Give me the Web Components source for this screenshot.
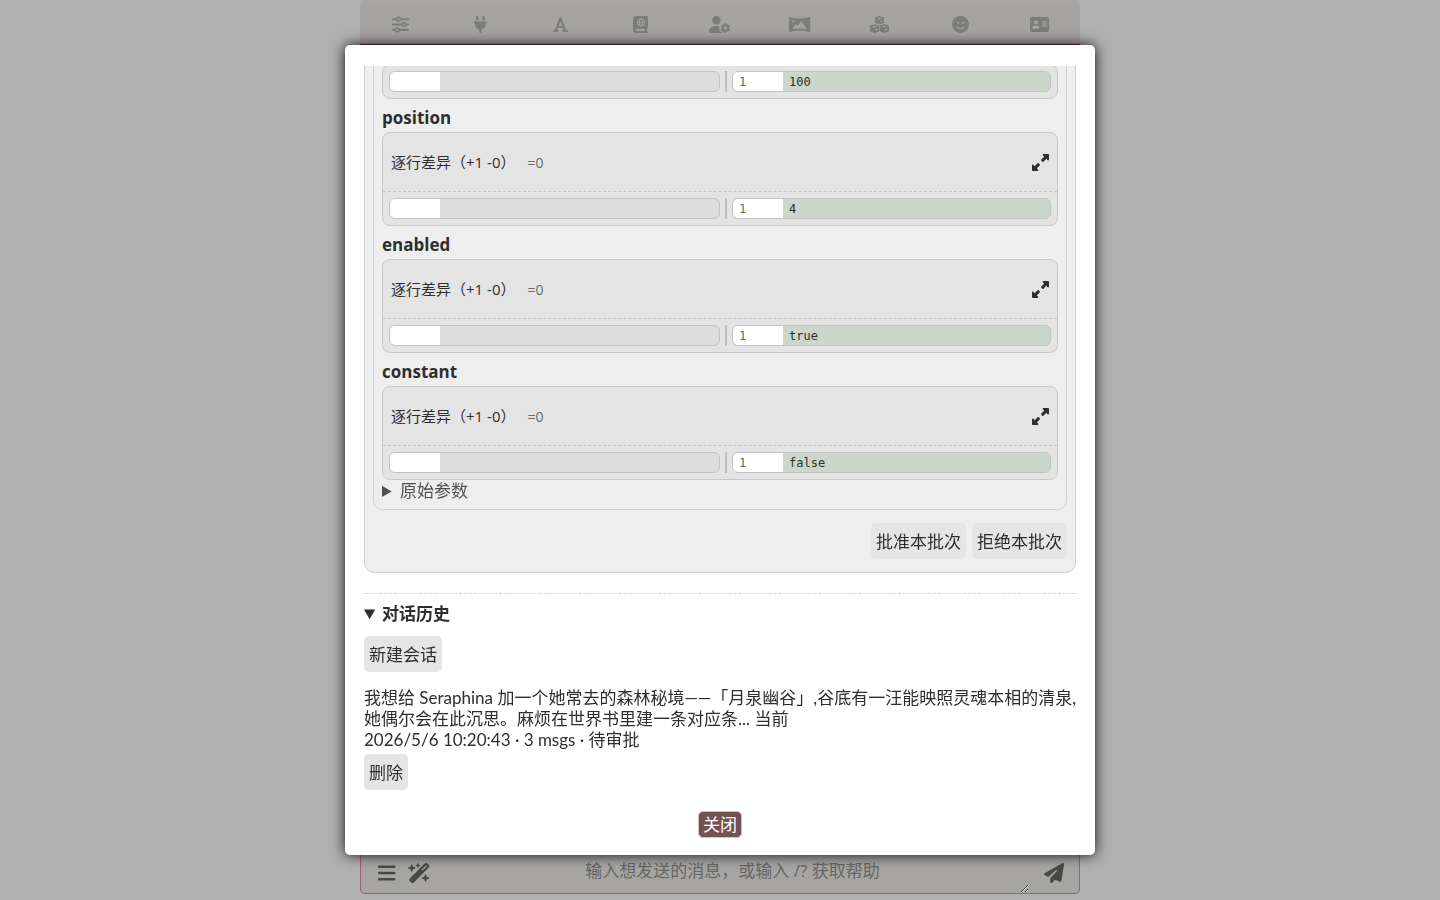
<!DOCTYPE html>
<html lang="zh-CN">
<head>
<meta charset="utf-8">
<meta name="viewport" content="width=device-width, initial-scale=1">
<title>Chat</title>
<style>
    html, body {
        height: 100%;
    }

    body {
        margin: 0;
        background: #b0b0b0;
        color: #2e2e2e;
        font: 17px/21px "Open Sans", "Noto Sans CJK SC", sans-serif;
        overflow: hidden;
    }
</style>
</head>
<body>
<chat-app></chat-app>

<script>
const ICONS = {
    sliders: [512, '<path d="M0 416c0 17.7 14.3 32 32 32l54.7 0c12.3 28.3 40.5 48 73.3 48s61-19.7 73.3-48L480 448c17.7 0 32-14.3 32-32s-14.3-32-32-32l-246.7 0c-12.3-28.3-40.5-48-73.3-48s-61 19.7-73.3 48L32 384c-17.7 0-32 14.3-32 32zm128 0a32 32 0 1 1 64 0 32 32 0 1 1 -64 0zM320 256a32 32 0 1 1 64 0 32 32 0 1 1 -64 0zm32-80c-32.8 0-61 19.7-73.3 48L32 224c-17.7 0-32 14.3-32 32s14.3 32 32 32l246.7 0c12.3 28.3 40.5 48 73.3 48s61-19.7 73.3-48l54.7 0c17.7 0 32-14.3 32-32s-14.3-32-32-32l-54.7 0c-12.3-28.3-40.5-48-73.3-48zM192 128a32 32 0 1 1 0-64 32 32 0 1 1 0 64zm73.3-64C253 35.7 224.8 16 192 16s-61 19.7-73.3 48L32 64C14.3 64 0 78.3 0 96s14.3 32 32 32l86.7 0c12.3 28.3 40.5 48 73.3 48s61-19.7 73.3-48L480 128c17.7 0 32-14.3 32-32s-14.3-32-32-32L265.3 64z"/>'],
    plug: [384, '<path d="M96 0C78.3 0 64 14.3 64 32v96h64V32c0-17.7-14.3-32-32-32zM288 0c-17.7 0-32 14.3-32 32v96h64V32c0-17.7-14.3-32-32-32zM32 160c-17.7 0-32 14.3-32 32s14.3 32 32 32v32c0 77.4 55 142 128 156.8V480c0 17.7 14.3 32 32 32s32-14.3 32-32V412.8C297 398 352 333.4 352 256V224c17.7 0 32-14.3 32-32s-14.3-32-32-32H32z"/>'],
    font: [448, '<g fill="none" stroke="currentColor" stroke-width="66" stroke-linecap="round" stroke-linejoin="round"><path d="M80 448L224 66 368 448M138 332h172M32 448h96M320 448h96"/></g>'],
    atlas: [448, '<path d="M0 96C0 43 43 0 96 0H384h32c17.7 0 32 14.3 32 32V352c0 17.7-14.3 32-32 32v64c17.7 0 32 14.3 32 32s-14.3 32-32 32H384 96c-53 0-96-43-96-96V96zM64 416c0 17.7 14.3 32 32 32H352V384H96c-17.7 0-32 14.3-32 32z"/><g fill="none" stroke="#a4a3a1" stroke-width="26"><circle cx="240" cy="192" r="112"/><ellipse cx="240" cy="192" rx="48" ry="112"/><path d="M128 192h224"/></g>'],
    userGear: [640, '<path d="M224 0a128 128 0 1 1 0 256A128 128 0 1 1 224 0zM178.3 304h91.4c11.8 0 23.4 1.2 34.5 3.3c-2.1 18.5 7.4 35.6 21.8 44.8c-16.6 10.6-26.7 31.6-20 53.3c4 12.9 9.4 25.5 16.4 37.6s15.2 23.1 24.4 33c15.7 16.9 39.6 18.4 57.2 8.7v.9c0 9.2 2.7 18.5 7.9 26.3H29.7C13.3 512 0 498.7 0 482.3C0 383.8 79.8 304 178.3 304z"/><g fill="none" stroke="currentColor"><circle cx="496" cy="360" r="84" stroke-width="66"/><path stroke-width="70" stroke-linecap="round" d="M496 248v-6M496 472v6M399 304l-5-3M593 416l5 3M399 416l-5 3M593 304l5-3"/></g>'],
    panorama: [640, '<path d="M45.6 32C20.4 32 0 52.4 0 77.6V434.4C0 459.6 20.4 480 45.6 480c5.1 0 10-.8 14.7-2.4C74.6 472.8 177.6 440 320 440s245.4 32.8 259.6 37.6c4.7 1.6 9.7 2.4 14.7 2.4c25.2 0 45.6-20.4 45.6-45.6V77.6C640 52.4 619.6 32 594.4 32c-5 0-10 .8-14.7 2.4C565.4 39.2 462.4 72 320 72S74.6 39.2 60.4 34.4C55.6 32.8 50.7 32 45.6 32zM96 160a32 32 0 1 1 64 0 32 32 0 1 1 -64 0zm272 0c7.9 0 15.4 3.9 19.8 10.5L512.3 353c5.4 8 5.6 18.4 .4 26.5s-14.7 12.3-24.2 10.7C442.7 382.4 385.2 376 320 376c-65.6 0-123.4 6.5-169.3 14.4c-9.8 1.7-19.7-2.9-24.7-11.5s-4.3-19.4 1.9-27.2L197.3 265c4.6-5.7 11.4-9 18.7-9s14.2 3.3 18.7 9l26.4 33.1 87-127.6c4.5-6.6 11.9-10.5 19.8-10.5z"/>'],
    cubes: [576, `<g stroke="currentColor" stroke-width="48" stroke-linejoin="round">
        <path d="M288 24l108 40v128l-108 44-108-44V64zM140 268l116 42v134l-116 44-116-44V310zM436 268l116 42v134l-116 44-116-44V310z"/></g>
        <g fill="#a4a3a1"><path d="M288 48l66 24-66 26-66-26zM316 146l52-20v48l-52 22zM140 294l70 26-70 28-70-28zM168 398l56-22v54l-56 22zM436 294l70 26-70 28-70-28zM464 398l56-22v54l-56 22z"/></g>`],
    smile: [512, '<path d="M256 512A256 256 0 1 0 256 0a256 256 0 1 0 0 512zM164.1 325.5C182 346.2 212.6 368 256 368s74-21.8 91.9-42.5c5.8-6.7 15.9-7.4 22.6-1.6s7.4 15.9 1.6 22.6C349.8 372.1 311.1 400 256 400s-93.8-27.9-116.1-53.5c-5.8-6.7-5.1-16.8 1.6-22.6s16.8-5.1 22.6 1.6zM144.4 208a32 32 0 1 1 64 0 32 32 0 1 1 -64 0zm192-32a32 32 0 1 1 0 64 32 32 0 1 1 0-64z"/>'],
    card: [576, '<path d="M64 32C28.7 32 0 60.7 0 96V416c0 35.3 28.7 64 64 64H512c35.3 0 64-28.7 64-64V96c0-35.3-28.7-64-64-64H64zm80 256h64c44.2 0 80 35.8 80 80c0 8.8-7.2 16-16 16H80c-8.8 0-16-7.2-16-16c0-44.2 35.8-80 80-80zm-32-96a64 64 0 1 1 128 0 64 64 0 1 1 -128 0zm256-32H496c8.8 0 16 7.2 16 16s-7.2 16-16 16H368c-8.8 0-16-7.2-16-16s7.2-16 16-16zm0 64H496c8.8 0 16 7.2 16 16s-7.2 16-16 16H368c-8.8 0-16-7.2-16-16s7.2-16 16-16zm0 64H496c8.8 0 16 7.2 16 16s-7.2 16-16 16H368c-8.8 0-16-7.2-16-16s7.2-16 16-16z"/>'],
    bars: [448, '<path d="M0 96C0 78.3 14.3 64 32 64H416c17.7 0 32 14.3 32 32s-14.3 32-32 32H32C14.3 128 0 113.7 0 96zM0 256c0-17.7 14.3-32 32-32H416c17.7 0 32 14.3 32 32s-14.3 32-32 32H32c-17.7 0-32-14.3-32-32zM448 416c0 17.7-14.3 32-32 32H32c-17.7 0-32-14.3-32-32s14.3-32 32-32H416c17.7 0 32 14.3 32 32z"/>'],
    wand: [576, '<path d="M234.7 42.7L197 56.8c-3 1.1-5 4-5 7.2s2 6.1 5 7.2l37.7 14.1L248.8 123c1.1 3 4 5 7.2 5s6.1-2 7.2-5l14.1-37.7L315 71.2c3-1.1 5-4 5-7.2s-2-6.1-5-7.2L277.3 42.7 263.2 5c-1.1-3-4-5-7.2-5s-6.1 2-7.2 5L234.7 42.7zM46.1 395.4c-18.7 18.7-18.7 49.1 0 67.9l34.6 34.6c18.7 18.7 49.1 18.7 67.9 0L529.9 116.5c18.7-18.7 18.7-49.1 0-67.9L495.3 14.1c-18.7-18.7-49.1-18.7-67.9 0L46.1 395.4zM484.6 82.6l-105 105-23.3-23.3 105-105 23.3 23.3zM7.5 117.2C3 118.9 0 123.2 0 128s3 9.1 7.5 10.8L64 160l21.2 56.5c1.7 4.5 6 7.5 10.8 7.5s9.1-3 10.8-7.5L128 160l56.5-21.2c4.5-1.7 7.5-6 7.5-10.8s-3-9.1-7.5-10.8L128 96 106.8 39.5C105.1 35 100.8 32 96 32s-9.1 3-10.8 7.5L64 96 7.5 117.2zm352 256c-4.5 1.7-7.5 6-7.5 10.8s3 9.1 7.5 10.8L416 416l21.2 56.5c1.7 4.5 6 7.5 10.8 7.5s9.1-3 10.8-7.5L480 416l56.5-21.2c4.5-1.7 7.5-6 7.5-10.8s-3-9.1-7.5-10.8L480 352l-21.2-56.5c-1.7-4.5-6-7.5-10.8-7.5s-9.1 3-10.8 7.5L416 352l-56.5 21.2z"/>'],
    plane: [512, '<path d="M498.1 5.6c10.1 7 15.4 19.1 13.5 31.2l-64 416c-1.5 9.7-7.4 18.2-16 23s-18.9 5.4-28 1.6L284 427.7l-68.5 74.1c-8.9 9.7-22.9 12.9-35.2 8.1S160 493.2 160 480V396.4c0-4 1.5-7.8 4.2-10.7L331.8 202.8c5.8-6.3 5.6-16-.4-22s-15.7-6.4-22-.7L106 360.8 17.7 316.6C7.1 311.3 .3 300.7 0 288.9s5.9-22.8 16.1-28.7l448-256c10.7-6.1 23.9-5.5 34 1.4z"/>'],
    expand: [512, '<path d="M344 0H488c13.3 0 24 10.7 24 24V168c0 9.7-5.8 18.5-14.8 22.2s-19.3 1.7-26.2-5.2l-39-39-87 87c-9.4 9.4-24.6 9.4-33.9 0l-32-32c-9.4-9.4-9.4-24.6 0-33.9l87-87L327 41c-6.9-6.9-8.9-17.2-5.2-26.2S334.3 0 344 0zM168 512H24c-13.3 0-24-10.7-24-24V344c0-9.7 5.8-18.5 14.8-22.2s19.3-1.7 26.2 5.2l39 39 87-87c9.4-9.4 24.6-9.4 33.9 0l32 32c9.4 9.4 9.4 24.6 0 33.9l-87 87 39 39c6.9 6.9 8.9 17.2 5.2 26.2s-12.5 14.8-22.2 14.8z"/>']
};

class UiIcon extends HTMLElement {
    constructor() {
        super();
        this.attachShadow({ mode: 'open' });
    }

    connectedCallback() {
        const [width, shape] = ICONS[this.getAttribute('name')];
        this.shadowRoot.innerHTML = `
            <style>
                :host {
                    display: inline-flex;
                    height: 17px;
                }

                svg {
                    height: 100%;
                    fill: currentColor;
                    overflow: visible;
                }
            </style>
            <svg viewBox="0 0 ${width} 512" aria-hidden="true">${shape}</svg>
        `;
    }
}

class MenuButton extends HTMLElement {
    constructor() {
        super();
        this.attachShadow({ mode: 'open' });
        this.shadowRoot.innerHTML = `
            <style>
                :host {
                    display: inline-block;
                }

                button {
                    display: block;
                    width: 100%;
                    min-height: 36px;
                    padding: 0 5px;
                    border: 0;
                    border-radius: 5px;
                    background: #e5e5e5;
                    color: inherit;
                    font: inherit;
                    white-space: nowrap;
                    cursor: pointer;
                }

                :host([primary]) button {
                    min-height: 27px;
                    padding: 0 4px;
                    border: 1px solid #cfc4c4;
                    background: #745252;
                    color: #fff;
                }
            </style>
            <button type="button"><slot></slot></button>
        `;
    }
}

class TopBar extends HTMLElement {
    constructor() {
        super();
        this.attachShadow({ mode: 'open' });
        const items = ['sliders', 'plug', 'font', 'atlas', 'userGear', 'panorama', 'cubes', 'smile', 'card'];
        this.shadowRoot.innerHTML = `
            <style>
                :host {
                    display: block;
                    border-bottom: 1px solid #6b2038;
                    border-radius: 5px 5px 0 0;
                    background: linear-gradient(#a8a7a5 5px, #a4a3a1 5px);
                    color: #7c7c7a;
                }

                nav {
                    display: flex;
                    height: 44px;
                    padding-top: 5px;
                    box-sizing: border-box;
                }

                button {
                    display: flex;
                    flex: 1;
                    align-items: center;
                    justify-content: center;
                    padding: 0;
                    border: 0;
                    background: none;
                    color: inherit;
                }
            </style>
            <nav>${items.map(name => `<button type="button" aria-label="${name}"><ui-icon name="${name}"></ui-icon></button>`).join('')}</nav>
        `;
    }
}

class SendForm extends HTMLElement {
    constructor() {
        super();
        this.attachShadow({ mode: 'open' });
        this.shadowRoot.innerHTML = `
            <style>
                :host {
                    display: block;
                    margin-bottom: 6px;
                }

                form {
                    display: flex;
                    align-items: center;
                    height: 44px;
                    padding: 0 15px;
                    box-sizing: border-box;
                    border: 1px solid #996475;
                    border-radius: 0 0 5px 5px;
                    background: #a6a5a3;
                    color: #484846;
                }

                button {
                    display: flex;
                    width: 30px;
                    padding: 2px 2px 0;
                    border: 0;
                    background: none;
                    color: inherit;
                }

                button[type=submit] {
                    justify-content: flex-end;
                    padding-right: 0;
                }

                ui-icon {
                    height: 20px;
                }

                textarea {
                    flex: 1;
                    height: 42px;
                    margin: 0 5px 0 0;
                    padding: 9px 0;
                    box-sizing: border-box;
                    border: 0;
                    background: none;
                    color: inherit;
                    font: inherit;
                    text-align: center;
                    resize: vertical;
                    overflow: hidden;
                    outline: 0;
                }

                textarea::placeholder {
                    color: #666664;
                }
            </style>
            <form>
                <button type="button" aria-label="menu"><ui-icon name="bars"></ui-icon></button>
                <button type="button" aria-label="tools"><ui-icon name="wand"></ui-icon></button>
                <textarea aria-label="message" placeholder="输入想发送的消息，或输入 /? 获取帮助"></textarea>
                <button type="submit" aria-label="send"><ui-icon name="plane"></ui-icon></button>
            </form>
        `;
    }
}

class DiffField extends HTMLElement {
    constructor() {
        super();
        this.attachShadow({ mode: 'open' });
    }

    connectedCallback() {
        const name = this.getAttribute('name');
        const header = `
            <header>
                <span>逐行差异（+1 -0）</span>
                <small>=0</small>
                <button type="button" aria-label="expand"><ui-icon name="expand"></ui-icon></button>
            </header>
        `;
        this.shadowRoot.innerHTML = `
            <style>
                :host {
                    display: block;
                }

                h3 {
                    margin: 0;
                    padding: 8px 0 4px;
                    font-size: 17px;
                    line-height: 21px;
                }

                .box {
                    border: 1px solid #c8c8c8;
                    border-radius: 8px;
                    background: #e4e4e4;
                }

                header {
                    display: flex;
                    align-items: center;
                    gap: 12px;
                    height: 58px;
                    padding: 0 8px;
                    border-bottom: 1px dashed #c4c4c4;
                    font-size: 15px;
                }

                small {
                    font-size: 14px;
                    color: #6a6a6a;
                }

                button {
                    display: flex;
                    margin-left: auto;
                    padding: 0;
                    border: 0;
                    background: none;
                    color: inherit;
                }

                .diff {
                    display: grid;
                    grid-template-columns: 50% 2px 1fr;
                    column-gap: 5px;
                    padding: 6px;
                    font: 12px/21px "DejaVu Sans Mono", monospace;
                }

                .bar {
                    background: #bebebe;
                }

                .pane {
                    display: flex;
                    height: 19px;
                    border: 1px solid #c3c3c3;
                    border-radius: 6px;
                    background: #ddd;
                    overflow: hidden;
                }

                .gutter {
                    width: 44px;
                    padding-left: 6px;
                    background: #fff;
                    color: #666;
                }

                .added {
                    background: #ccd6cc;
                }

                .code {
                    padding-left: 6px;
                }
            </style>
            ${name ? `<h3>${name}</h3>` : ''}
            <div class="box">
                ${name ? header : ''}
                <div class="diff">
                    <div class="pane"><div class="gutter"></div></div>
                    <div class="bar"></div>
                    <div class="pane added"><div class="gutter">1</div><div class="code">${this.getAttribute('value')}</div></div>
                </div>
            </div>
        `;
    }
}

class ApprovalCard extends HTMLElement {
    constructor() {
        super();
        this.attachShadow({ mode: 'open' });
        this.shadowRoot.innerHTML = `
            <style>
                :host {
                    display: block;
                    padding: 8px;
                    border: 1px solid #d0d0d0;
                    border-radius: 10px;
                    background: #eee;
                }

                .operation {
                    padding: 8px;
                    border: 1px solid #d0d0d0;
                    border-radius: 10px;
                }

                summary {
                    color: #505050;
                }

                .actions {
                    display: flex;
                    justify-content: flex-end;
                    gap: 6px;
                    padding: 13px 0 5px;
                }
            </style>
            <div class="operation">
                <slot></slot>
                <details><summary>原始参数</summary></details>
            </div>
            <div class="actions">
                <menu-button>批准本批次</menu-button>
                <menu-button>拒绝本批次</menu-button>
            </div>
        `;
    }
}

class ChatHistory extends HTMLElement {
    constructor() {
        super();
        this.attachShadow({ mode: 'open' });
        this.shadowRoot.innerHTML = `
            <style>
                :host {
                    display: block;
                    margin-top: 20px;
                    padding-top: 9px;
                    border-top: 1px dashed #d4d4d4;
                }

                summary {
                    margin-bottom: 12px;
                    font-weight: bold;
                }

                .session {
                    margin: 15px -2px 4px 0;
                    font-family: Lato, "Noto Sans CJK SC", sans-serif;
                }
            </style>
            <details open>
                <summary>对话历史</summary>
                <menu-button>新建会话</menu-button>
                <div class="session">
                    <div>我想给 Seraphina 加一个她常去的森林秘境——「月泉幽谷」,谷底有一汪能映照灵魂本相的清泉,她偶尔会在此沉思。麻烦在世界书里建一条对应条... 当前</div>
                    <div>2026/5/6 10:20:43 · 3 msgs · 待审批</div>
                </div>
                <menu-button>删除</menu-button>
            </details>
        `;
    }
}

class PopupDialog extends HTMLElement {
    constructor() {
        super();
        this.attachShadow({ mode: 'open' });
        this.shadowRoot.innerHTML = `
            <style>
                :host {
                    position: fixed;
                    inset: 0;
                    display: flex;
                    align-items: center;
                    justify-content: center;
                }

                section {
                    display: flex;
                    flex-direction: column;
                    width: 750px;
                    max-width: 100%;
                    height: 90vh;
                    padding: 21px 19px 17px;
                    box-sizing: border-box;
                    border-radius: 5px;
                    background: #fff;
                    box-shadow: 0 0 14px rgba(0, 0, 0, 0.9);
                }

                .content {
                    display: flex;
                    flex: 1;
                    flex-direction: column;
                    justify-content: flex-end;
                    min-height: 0;
                    margin: 0 -4px;
                    padding: 0 4px;
                    overflow: hidden;
                }

                .content ::slotted(*) {
                    flex: none;
                }

                footer {
                    display: flex;
                    justify-content: center;
                    padding-top: 21px;
                }
            </style>
            <section role="dialog" aria-modal="true">
                <div class="content"><slot></slot></div>
                <footer><menu-button primary>关闭</menu-button></footer>
            </section>
        `;
    }
}

class ChatApp extends HTMLElement {
    constructor() {
        super();
        this.attachShadow({ mode: 'open' });
        this.shadowRoot.innerHTML = `
            <style>
                :host {
                    display: block;
                }

                main {
                    display: flex;
                    flex-direction: column;
                    justify-content: space-between;
                    width: 50%;
                    height: 100vh;
                    margin: 0 auto;
                }
            </style>
            <main>
                <top-bar></top-bar>
                <send-form></send-form>
            </main>
            <popup-dialog>
                <approval-card>
                    <diff-field value="100"></diff-field>
                    <diff-field name="position" value="4"></diff-field>
                    <diff-field name="enabled" value="true"></diff-field>
                    <diff-field name="constant" value="false"></diff-field>
                </approval-card>
                <chat-history></chat-history>
            </popup-dialog>
        `;
    }
}

customElements.define('ui-icon', UiIcon);
customElements.define('menu-button', MenuButton);
customElements.define('top-bar', TopBar);
customElements.define('send-form', SendForm);
customElements.define('diff-field', DiffField);
customElements.define('approval-card', ApprovalCard);
customElements.define('chat-history', ChatHistory);
customElements.define('popup-dialog', PopupDialog);
customElements.define('chat-app', ChatApp);
</script>
</body>
</html>
